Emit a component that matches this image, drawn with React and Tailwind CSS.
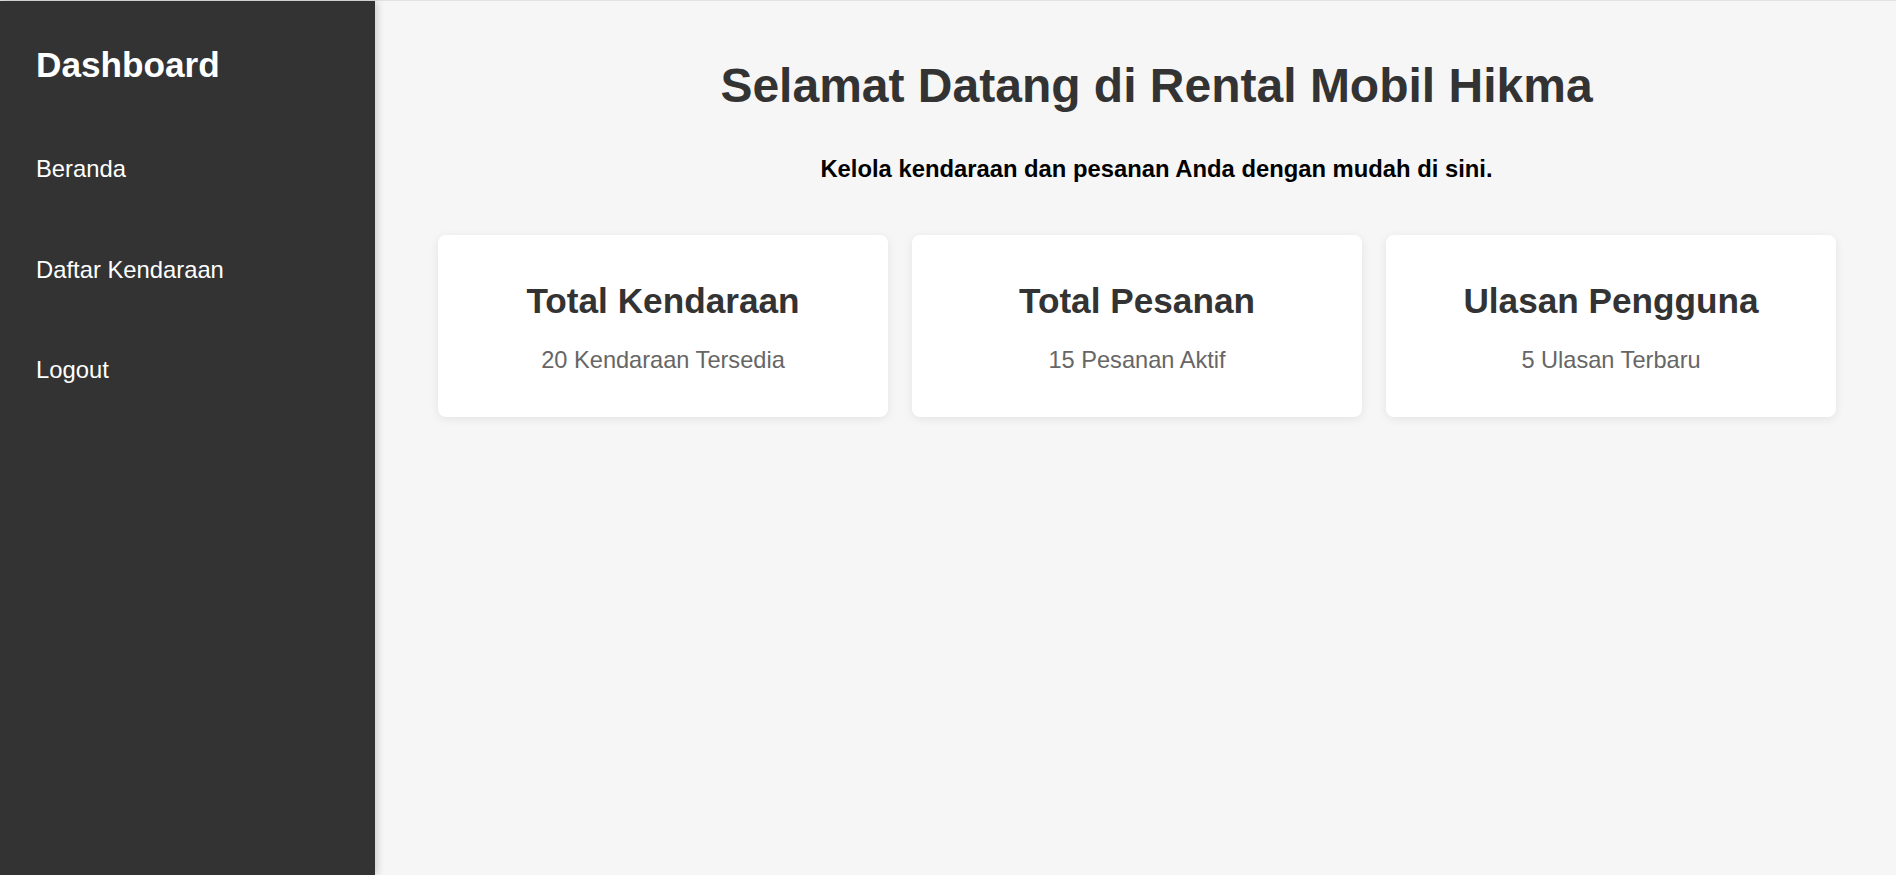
import React from "react";

const cards = [
  { title: "Total Kendaraan", text: "20 Kendaraan Tersedia" },
  { title: "Total Pesanan", text: "15 Pesanan Aktif" },
  { title: "Ulasan Pengguna", text: "5 Ulasan Terbaru" },
];

export default function App() {
  return (
    <div
      className="h-screen w-full flex flex-col bg-[#f6f6f6] overflow-hidden"
      style={{ fontFamily: '"Liberation Sans", Arial, sans-serif' }}
    >
      <div className="h-px w-full bg-[#e2e2e2] shrink-0" />
      <div className="flex flex-1 min-h-0">
        <aside className="w-[375px] shrink-0 bg-[#333333] text-white shadow-[2px_0_8px_rgba(0,0,0,0.18)] relative z-10 pl-[36px]">
          <h1 className="text-[35.2px] font-bold leading-[40px] mt-[44px]">Dashboard</h1>
          <nav className="mt-[34px] flex flex-col">
            {["Beranda", "Daftar Kendaraan", "Logout"].map((item) => (
              <a key={item} className="block text-[23.8px] leading-[28.5px] py-[36px] text-white">
                {item}
              </a>
            ))}
          </nav>
        </aside>
        <main className="flex-1 min-w-0 pl-[63px] pr-[60px]">
          <div className="pl-[39px] text-center">
            <h2 className="text-[48px] font-bold leading-[56px] text-[#333333] mt-[57px]">
              Selamat Datang di Rental Mobil Hikma
            </h2>
            <p className="text-[23.8px] font-bold leading-[28px] text-black mt-[41px]">
              Kelola kendaraan dan pesanan Anda dengan mudah di sini.
            </p>
          </div>
          <div className="grid grid-cols-3 gap-[24px] mt-[52px]">
            {cards.map((c) => (
              <div
                key={c.title}
                className="bg-white rounded-[8px] shadow-[0_2px_10px_rgba(0,0,0,0.08)] text-center pt-[46px] pb-[43px]"
              >
                <h3 className="text-[35.2px] font-bold leading-[40px] text-[#333333]">{c.title}</h3>
                <p className="text-[23.6px] leading-[28px] text-[#666666] mt-[25px]">{c.text}</p>
              </div>
            ))}
          </div>
        </main>
      </div>
    </div>
  );
}
